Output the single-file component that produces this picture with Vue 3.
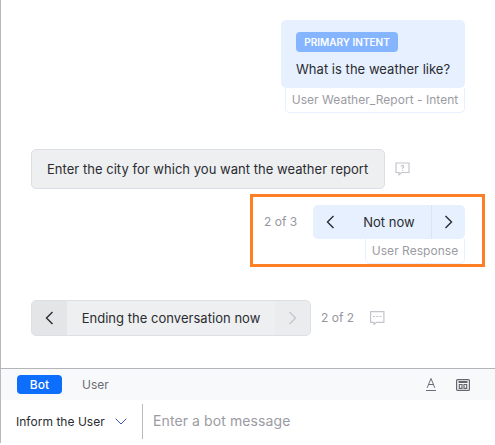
<script setup>
import { ref } from 'vue'

const activeTab = ref('Bot')
const tabs = ['Bot', 'User']
const message = ref('')
</script>

<template>
  <div class="panel">
    <main class="chat">
      <section class="row user intent">
        <div class="stack">
          <div class="card">
            <span class="badge">PRIMARY INTENT</span>
            <p class="question">What is the weather like?</p>
          </div>
          <div class="tag intent-tag"><span>User Weather_Report - Intent</span></div>
        </div>
      </section>

      <section class="row prompt">
        <div class="bubble"><span>Enter the city for which you want the weather report</span></div>
        <svg class="note" width="15" height="14" viewBox="0 0 15 14">
          <path d="M1 1H14V10.5H6.5L4 12.8V10.5H1Z" />
          <path d="M6.2 4.7C6.2 3 8.8 3 8.8 4.7C8.8 5.6 7.5 5.6 7.5 6.7M7.5 7.8V8.8" />
        </svg>
      </section>

      <section class="row highlight">
        <span class="count">2 of 3</span>
        <div class="stack">
          <div class="switcher blue">
            <button class="arrow" aria-label="Previous">
              <svg width="9" height="14" viewBox="0 0 9 14"><path d="M7.5 1L1.5 7L7.5 13" /></svg>
            </button>
            <span class="label">Not now</span>
            <button class="arrow next" aria-label="Next">
              <svg width="9" height="14" viewBox="0 0 9 14"><path d="M1.5 1L7.5 7L1.5 13" /></svg>
            </button>
          </div>
          <div class="tag response-tag"><span>User Response</span></div>
        </div>
      </section>

      <section class="row ending">
        <div class="switcher gray">
          <button class="arrow" aria-label="Previous">
            <svg width="9" height="14" viewBox="0 0 9 14"><path d="M7.5 1L1.5 7L7.5 13" /></svg>
          </button>
          <span class="label">Ending the conversation now</span>
          <button class="arrow next" aria-label="Next" disabled>
            <svg width="9" height="14" viewBox="0 0 9 14"><path d="M1.5 1L7.5 7L1.5 13" /></svg>
          </button>
        </div>
        <span class="count">2 of 2</span>
        <svg class="note dots" width="15" height="14" viewBox="0 0 15 14">
          <path d="M.6 .6H13.9V11.4H6.5L4 13.5V11.4H.6Z" />
          <path d="M3 5.5H5M6.2 5.5H8.2M9.4 5.5H11.4" />
        </svg>
      </section>
    </main>

    <footer>
      <div class="toolbar">
        <button
          v-for="tab in tabs"
          :key="tab"
          class="tab"
          :class="{ active: tab === activeTab }"
          @click="activeTab = tab"
        >{{ tab }}</button>
        <svg class="format" width="10" height="13" viewBox="0 0 10 13">
          <path d="M1.2 9.8L5 .5L8.8 9.8M2.5 6.5H7.5" />
          <path d="M0 12.5H10" />
        </svg>
        <svg class="template" width="14" height="12" viewBox="0 0 14 12">
          <rect x=".6" y=".6" width="12.8" height="10.8" rx="1" />
          <path class="bar" d="M2.5 3H11.5" />
          <path d="M3.3 5.5H6V9.3H3.3ZM8 5.5H10.7V9.3H8Z" />
        </svg>
      </div>
      <div class="composer">
        <button class="mode">
          <span>Inform the User</span>
          <svg width="12" height="7" viewBox="0 0 12 7"><path d="M.7 .7L6 6L11.3 .7" /></svg>
        </button>
        <input v-model="message" placeholder="Enter a bot message" />
      </div>
    </footer>
  </div>
</template>

<style>
body {
  background: #fff;
}
</style>

<style scoped>
* {
  box-sizing: border-box;
}
.panel {
  width: 495px;
  height: 443px;
  border-left: 1px solid #b9b9be;
  display: flex;
  flex-direction: column;
  font: 13px/18px Inter, sans-serif;
  letter-spacing: 0.03px;
  color: #2a2c30;
  overflow: hidden;
}
button {
  font: inherit;
  letter-spacing: inherit;
  color: inherit;
  border: 0;
  padding: 0;
  background: none;
}
span,
.tab,
p {
  white-space: nowrap;
}
svg {
  display: block;
  flex: none;
  fill: none;
  stroke: currentColor;
}
.chat {
  height: 368px;
  padding: 20px 10px 0 30px;
  display: flex;
  flex-direction: column;
}
.row {
  display: flex;
}
.stack {
  display: flex;
  flex-direction: column;
  align-items: flex-end;
}
.intent {
  justify-content: flex-end;
  padding-right: 20px;
}
.card {
  width: 184px;
  height: 68px;
  padding: 12px 15px;
  background: #e6f0ff;
  border-radius: 5px;
}
.badge {
  display: flex;
  align-items: center;
  justify-content: center;
  width: 102px;
  height: 20px;
  border-radius: 4px;
  background: #85b5ff;
  color: #fff;
  font-size: 10px;
  font-weight: 600;
  letter-spacing: 0.02px;
}
.question {
  margin: 8px 0 0;
}
.tag {
  display: flex;
  align-items: center;
  justify-content: center;
  border: 1px solid #e6f0ff;
  border-top: 0;
  border-radius: 0 0 5px 5px;
  color: #9b9ba3;
  font-size: 12px;
}
.intent-tag {
  width: 180px;
  height: 25px;
}
.prompt {
  margin-top: 36px;
  align-items: center;
  gap: 10px;
}
.bubble {
  width: 354px;
  height: 40px;
  padding: 0 15px;
  display: flex;
  align-items: center;
  background: #eeeff1;
  border: 1px solid #dddde6;
  border-radius: 5px;
}
.note {
  color: #c4c5cb;
  stroke-width: 1.2;
}
.highlight {
  align-self: flex-end;
  width: 235px;
  height: 73px;
  margin-top: 5px;
  padding: 8px 17px 0 11px;
  border: 3px solid #ff7f27;
  justify-content: space-between;
}
.count {
  color: #96979e;
  font-size: 12px;
}
.highlight .count {
  margin-top: 8px;
}
.switcher {
  display: flex;
  border-radius: 5px;
  overflow: hidden;
}
.arrow {
  display: flex;
  align-items: center;
  justify-content: center;
}
.arrow svg {
  stroke-width: 1.4;
}
.label {
  display: flex;
  align-items: center;
  justify-content: center;
  flex: 1;
}
.blue {
  width: 152px;
  height: 34px;
  background: #e6f0ff;
}
.blue .arrow {
  width: 34px;
}
.blue .next {
  border-left: 1px solid #d8e5f7;
}
.response-tag {
  width: 100px;
  height: 25px;
}
.ending {
  margin-top: 33px;
  align-items: center;
}
.gray {
  width: 280px;
  height: 36px;
  background: #eeeff1;
  border: 1px solid #dedfe4;
}
.gray .arrow {
  width: 35px;
  background: #e3e5e7;
}
.gray .next {
  color: #c5c6ca;
  background: #ebecee;
}
.ending .count {
  width: 33px;
  margin: 0 16px 0 10px;
}
.toolbar {
  height: 32px;
  border-top: 1px solid #b4b5b8;
  background: #f8f9fb;
  padding: 0 25px 0 16px;
  display: flex;
  align-items: center;
}
.tab {
  height: 19px;
  line-height: 19px;
  font-size: 12px;
  color: #6d6e73;
  margin-right: auto;
}
.tab.active {
  width: 45px;
  background: #0d6efd;
  color: #fff;
  border-radius: 4px;
  font-weight: 500;
  margin-right: 20px;
}
.format {
  color: #6b6e78;
  margin-right: 20px;
}
.template {
  color: #63666c;
  stroke-width: 1.2;
}
.bar {
  stroke-width: 2;
}
.composer {
  height: 43px;
  padding: 4px 0;
  padding-left: 15px;
  display: flex;
}
.mode {
  width: 126px;
  display: flex;
  align-items: center;
  gap: 10px;
  font-size: 12px;
}
.mode svg {
  color: #3f4fa8;
}
input {
  width: 340px;
  border: 0;
  border-left: 1px solid #b9b9be;
  padding: 0 0 2px 10px;
  font: 14px Inter, sans-serif;
  letter-spacing: 0.1px;
  outline: 0;
}
input::placeholder {
  color: #9b9ba3;
  opacity: 1;
}
</style>
